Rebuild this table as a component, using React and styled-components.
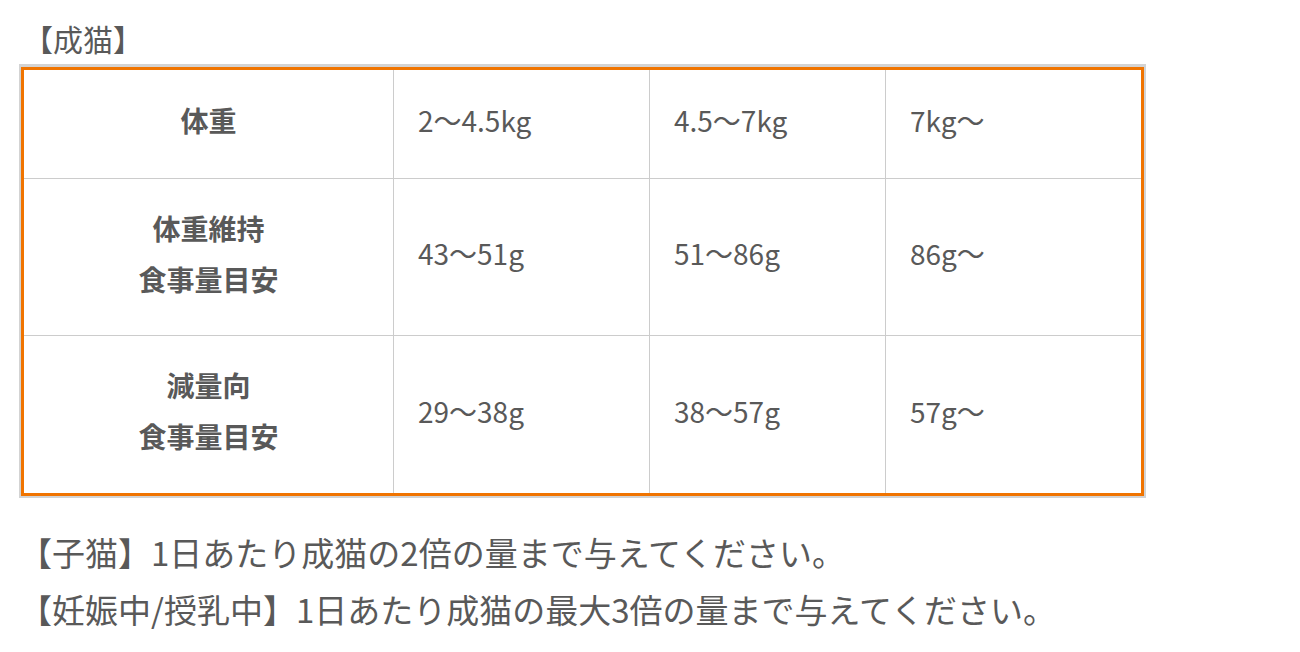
import React from "react";
import styled, { createGlobalStyle } from "styled-components";

const GlobalStyle = createGlobalStyle`
    body {
        margin: 0;
        background: #fff;
        font-family: "Noto Sans CJK JP", "Noto Sans", sans-serif;
        color: #595959;
    }
`;

const Page = styled.div`
    padding: 10px 0 0 19px;
    font-size: 28px;
    line-height: 56px;
`;

const Heading = styled.p`
    margin: 0;
    padding-left: 4px;
    height: 54px;
    font-size: 30px;
`;

const Frame = styled.div`
    width: fit-content;
    border: 2px solid #d3d3d3;
    border-top-width: 3px;
`;

const Table = styled.table`
    table-layout: fixed;
    width: 1123px;
    border-collapse: separate;
    border-spacing: 0;
    border: 3px solid #f07400;
`;

const Cell = styled.td`
    height: ${(p) => p.$h}px;
    box-sizing: border-box;
    padding: 0 24px 7px;
    vertical-align: middle;
    line-height: 51px;
    border-right: ${(p) => (p.$last ? "none" : "1px solid #cccccc")};
    border-bottom: ${(p) => (p.$bottom ? "none" : "1px solid #cccccc")};
`;

const HeadCell = styled(Cell)`
    text-align: center;
    font-weight: bold;
`;

const Notes = styled.div`
    margin-top: 26px;
    font-size: 33px;
    line-height: 57px;
`;

const Note = styled.p`
    margin: 0;
`;

const rows = [
    { label: ["体重"], values: ["2〜4.5kg", "4.5〜7kg", "7kg〜"], h: 109 },
    {
        label: ["体重維持", "食事量目安"],
        values: ["43〜51g", "51〜86g", "86g〜"],
        h: 157,
    },
    {
        label: ["減量向", "食事量目安"],
        values: ["29〜38g", "38〜57g", "57g〜"],
        h: 157,
    },
];

const widths = [370, 256, 236, 255];

export default function App() {
    return (
        <>
            <GlobalStyle />
            <Page>
                <Heading>【成猫】</Heading>
                <Frame>
                    <Table>
                        <colgroup>
                            {widths.map((w, i) => (
                                <col key={i} style={{ width: w }} />
                            ))}
                        </colgroup>
                        <tbody>
                            {rows.map((row, r) => {
                                const bottom = r === rows.length - 1;
                                return (
                                    <tr key={r}>
                                        <HeadCell $h={row.h} $bottom={bottom}>
                                            {row.label.map((l, i) => (
                                                <div key={i}>{l}</div>
                                            ))}
                                        </HeadCell>
                                        {row.values.map((v, i) => (
                                            <Cell
                                                key={i}
                                                $h={row.h}
                                                $bottom={bottom}
                                                $last={i === row.values.length - 1}
                                            >
                                                {v}
                                            </Cell>
                                        ))}
                                    </tr>
                                );
                            })}
                        </tbody>
                    </Table>
                </Frame>
                <Notes>
                    <Note>【子猫】1日あたり成猫の2倍の量まで与えてください。</Note>
                    <Note>【妊娠中/授乳中】1日あたり成猫の最大3倍の量まで与えてください。</Note>
                </Notes>
            </Page>
        </>
    );
}
